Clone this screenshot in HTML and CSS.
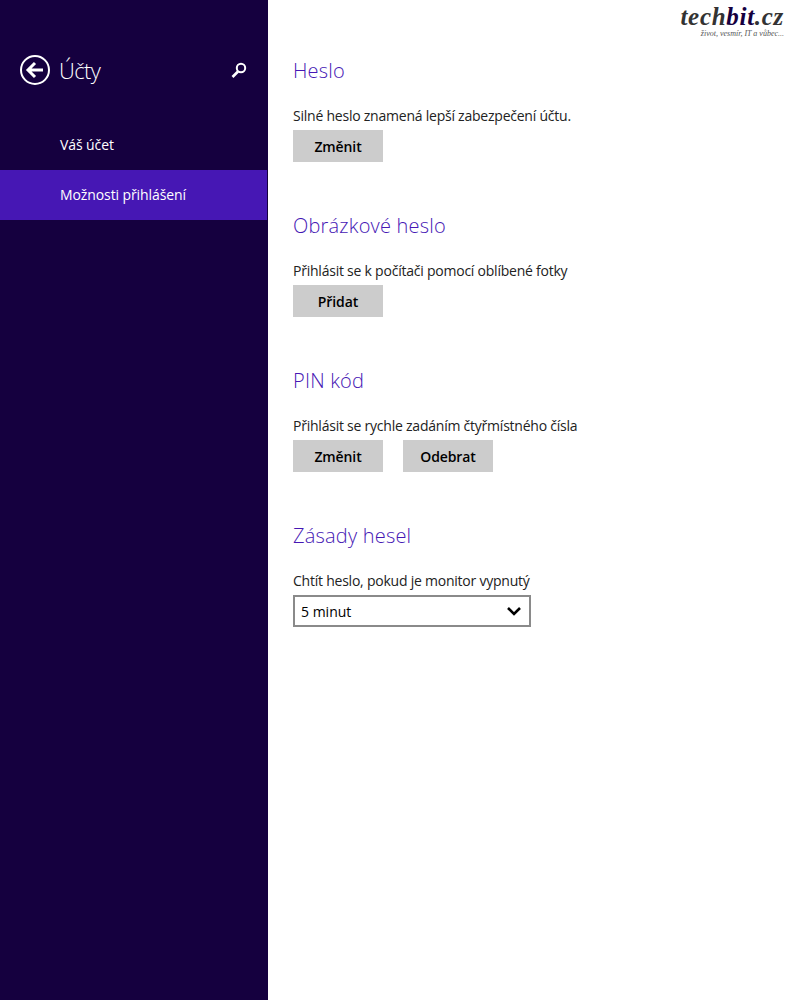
FILE: index.html
```html
<!DOCTYPE html>
<html lang="cs">
<head>
<meta charset="UTF-8">
<meta name="viewport" content="width=device-width, initial-scale=1.0">
<title>Účty</title>
<link rel="stylesheet" href="styles.css">
</head>
<body>
<div class="sidebar">
  <div class="side-header">
    <svg class="back-icon" width="32" height="32" viewBox="0 0 32 32">
      <circle cx="16" cy="16" r="14" fill="none" stroke="#fff" stroke-width="2"/>
      <path d="M16 9 L9 16 L16 23 M9.5 16 H24" fill="none" stroke="#fff" stroke-width="3"/>
    </svg>
    <h1 class="side-title">Účty</h1>
    <svg class="search-icon" width="16" height="17" viewBox="0 0 16 17">
      <circle cx="10" cy="6" r="4.2" fill="none" stroke="#fff" stroke-width="2"/>
      <path d="M7 9.5 L1.5 15" fill="none" stroke="#fff" stroke-width="2.6"/>
    </svg>
  </div>
  <ul class="side-nav">
    <li>Váš účet</li>
    <li class="active">Možnosti přihlášení</li>
  </ul>
</div>

<div class="content">
  <div class="logo">
    <div class="logo-name">tech<span>bit</span>.cz</div>
    <div class="logo-sub">život, vesmír, IT a vůbec...</div>
  </div>

  <div class="section">
    <h2>Heslo</h2>
    <p>Silné heslo znamená lepší zabezpečení účtu.</p>
    <div class="buttons">
      <button>Změnit</button>
    </div>
  </div>

  <div class="section">
    <h2>Obrázkové heslo</h2>
    <p>Přihlásit se k počítači pomocí oblíbené fotky</p>
    <div class="buttons">
      <button>Přidat</button>
    </div>
  </div>

  <div class="section">
    <h2>PIN kód</h2>
    <p>Přihlásit se rychle zadáním čtyřmístného čísla</p>
    <div class="buttons">
      <button>Změnit</button>
      <button>Odebrat</button>
    </div>
  </div>

  <div class="section">
    <h2>Zásady hesel</h2>
    <p>Chtít heslo, pokud je monitor vypnutý</p>
    <div class="select">
      <span>5 minut</span>
      <svg width="14" height="10" viewBox="0 0 14 10">
        <path d="M1 2 L7 8 L13 2" fill="none" stroke="#000" stroke-width="2.6"/>
      </svg>
    </div>
  </div>
</div>
</body>
</html>
```

FILE: styles.css
```css
body {
  font-family: "Open Sans", Arial, sans-serif;
  margin: 0;
  padding: 0;
  height: 1000px;
  display: flex;
  background-color: #fff;
  overflow: hidden;
}

.sidebar {
  width: 268px;
  background-color: #15003f;
  color: #fff;
  flex-shrink: 0;
}

.side-header {
  display: flex;
  align-items: center;
  height: 32px;
  padding: 54px 20px 0 19px;
}

.back-icon {
  margin-right: 8px;
}

.side-title {
  flex: 1;
  margin: 0;
  font-size: 22px;
  font-weight: 300;
  letter-spacing: -0.6px;
}

.search-icon {
  margin-right: 1px;
}

.side-nav {
  list-style: none;
  margin: 34px 0 0;
  padding: 0;
}

.side-nav li {
  height: 50px;
  line-height: 50px;
  padding-left: 60px;
  font-size: 14px;
  letter-spacing: -0.1px;
}

.side-nav .active {
  background-color: #4617b4;
  margin-right: 1px;
}

.content {
  position: relative;
  flex: 1;
  padding: 55px 0 0 25px;
}

.logo {
  position: absolute;
  top: 4px;
  right: 16px;
  text-align: right;
  font-family: "Liberation Serif", serif;
  font-style: italic;
  font-weight: bold;
}

.logo-name {
  font-size: 25px;
  line-height: 26px;
  letter-spacing: 0.7px;
  color: #333333;
}

.logo-name span {
  color: #15003f;
}

.logo-sub {
  font-size: 8px;
  line-height: 7px;
  font-weight: 400;
  color: #555;
}

.section {
  height: 155px;
}

h2 {
  margin: 0;
  height: 32px;
  line-height: 32px;
  font-size: 20px;
  font-weight: 300;
  letter-spacing: 0.2px;
  color: #4617b4;
}

p {
  margin: 18px 0 0;
  height: 25px;
  line-height: 22px;
  font-size: 14px;
  font-weight: 400;
  letter-spacing: -0.23px;
  color: #222;
}

.buttons {
  display: flex;
  gap: 20px;
}

button {
  width: 90px;
  height: 32px;
  padding: 0;
  border: none;
  background-color: #cccccc;
  color: #000;
  font-family: "Open Sans", Arial, sans-serif;
  font-size: 14px;
  font-weight: 600;
  letter-spacing: -0.1px;
}

.select {
  width: 238px;
  height: 32px;
  box-sizing: border-box;
  border: 2px solid #8a8a8a;
  display: flex;
  align-items: center;
  justify-content: space-between;
  padding: 0 8px 0 6px;
  font-size: 14px;
  color: #000;
}
```
